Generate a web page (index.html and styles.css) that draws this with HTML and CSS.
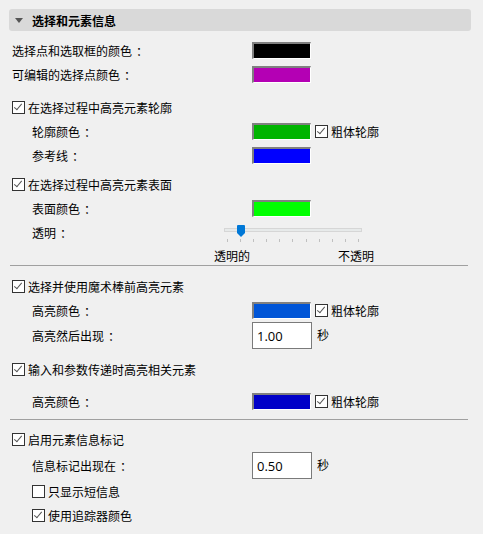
FILE: index.html
```html
<!DOCTYPE html>
<html lang="zh">
<head>
<meta charset="utf-8">
<link rel="stylesheet" href="styles.css">
</head>
<body>
<div class="panel">
  <div class="header">
    <svg class="tri" width="8" height="5" viewBox="0 0 8 5"><path d="M0 0H8L4 5Z" fill="#555"/></svg>
    <span>选择和元素信息</span>
  </div>

  <div class="content">
    <div class="row r1"><span class="label">选择点和选取框的颜色<span class="colon">：</span></span><span class="swatch" style="--c:#000000"></span></div>
    <div class="row"><span class="label">可编辑的选择点颜色<span class="colon">：</span></span><span class="swatch" style="--c:#b400b4"></span></div>

    <div class="row cbrow g9"><span class="cb on"></span><span>在选择过程中高亮元素轮廓</span></div>
    <div class="row"><span class="label ind">轮廓颜色<span class="colon">：</span></span><span class="swatch" style="--c:#00b400"></span><span class="cb on sm"></span><span>粗体轮廓</span></div>
    <div class="row"><span class="label ind">参考线<span class="colon">：</span></span><span class="swatch" style="--c:#0000ff"></span></div>

    <div class="row cbrow g5"><span class="cb on"></span><span>在选择过程中高亮元素表面</span></div>
    <div class="row"><span class="label ind">表面颜色<span class="colon">：</span></span><span class="swatch" style="--c:#00ff00"></span></div>
    <div class="row slrow">
      <span class="label ind">透明<span class="colon">：</span></span>
      <div class="slider">
        <div class="track"></div>
        <svg class="thumb" width="8" height="12" viewBox="0 0 8 12"><path d="M0 1Q0 0 1 0H7Q8 0 8 1V8L4 12L0 8Z" fill="#0078d7"/></svg>
        <div class="ticks"><i></i><i></i><i></i><i></i><i></i><i></i><i></i><i></i><i></i><i></i><i></i></div>
      </div>
    </div>
    <div class="sllabels"><span>透明的</span><span>不透明</span></div>
  </div>

  <div class="sep"></div>

  <div class="content">
    <div class="row cbrow g8"><span class="cb on"></span><span>选择并使用魔术棒前高亮元素</span></div>
    <div class="row"><span class="label ind">高亮颜色<span class="colon">：</span></span><span class="swatch" style="--c:#0055d7"></span><span class="cb on sm"></span><span>粗体轮廓</span></div>
    <div class="row inrow"><span class="label ind">高亮然后出现<span class="colon">：</span></span><span class="input">1.00</span><span class="unit">秒</span></div>
    <div class="row cbrow g8"><span class="cb on"></span><span>输入和参数传递时高亮相关元素</span></div>
    <div class="row g8"><span class="label ind">高亮颜色<span class="colon">：</span></span><span class="swatch" style="--c:#0000c8"></span><span class="cb on sm"></span><span>粗体轮廓</span></div>
  </div>

  <div class="sep s2"></div>

  <div class="content">
    <div class="row cbrow g7"><span class="cb on"></span><span>启用元素信息标记</span></div>
    <div class="row inrow g1"><span class="label ind">信息标记出现在<span class="colon">：</span></span><span class="input">0.50</span><span class="unit">秒</span></div>
    <div class="row cbrow ind2"><span class="cb"></span><span>只显示短信息</span></div>
    <div class="row cbrow ind2"><span class="cb on"></span><span>使用追踪器颜色</span></div>
  </div>
</div>
</body>
</html>
```

FILE: styles.css
```css
html, body {
  margin: 0;
  padding: 0;
  background: #f0f0f0;
}
body {
  font-family: "Noto Sans CJK SC", "Noto Sans", sans-serif;
  font-size: 12px;
  color: #000;
  width: 483px;
  height: 534px;
  overflow: hidden;
}
.panel {
  padding: 9px 12px 0 9px;
}
.header {
  height: 22px;
  background: #d9d9d9;
  border-radius: 3px;
  display: flex;
  align-items: center;
  font-weight: bold;
  font-size: 12px;
}
.header .tri {
  margin: 0 9px 0 6px;
}
.content {
  padding-left: 3px;
}
.row {
  height: 24px;
  display: flex;
  align-items: center;
  white-space: nowrap;
}
.colon {
  margin-left: 4px;
}
.r1 { margin-top: 7px; }
.g9 { margin-top: 9px; }
.g8 { margin-top: 8px; }
.g7 { margin-top: 7px; }
.g5 { margin-top: 5px; }
.g1 { margin-top: 1px; }
.label {
  width: 240px;
  flex: none;
}
.label.ind {
  padding-left: 20px;
  width: 220px;
}
.swatch {
  width: 59px;
  height: 17px;
  box-sizing: border-box;
  border-top: 2px solid #808080;
  border-left: 2px solid #808080;
  border-right: 1px solid #fff;
  border-bottom: 1px solid #fff;
  background: var(--c);
  flex: none;
}
.cb {
  width: 13px;
  height: 13px;
  box-sizing: border-box;
  border: 1px solid #333;
  background: #fff;
  margin-right: 3px;
  flex: none;
  position: relative;
}
.cb.on::after {
  content: "";
  position: absolute;
  left: 3px;
  top: 0px;
  width: 3px;
  height: 7px;
  border-right: 1.4px solid #555;
  border-bottom: 1.4px solid #555;
  transform: rotate(40deg);
}
.cb.sm {
  margin-left: 4px;
}
.ind2 {
  padding-left: 20px;
}
.slrow {
  position: relative;
}
.slider {
  position: relative;
  width: 140px;
  height: 24px;
  margin-left: -28px;
}
.track {
  position: absolute;
  left: 0;
  top: 8px;
  width: 138px;
  height: 4px;
  box-sizing: border-box;
  background: #e7eaea;
  border: 1px solid #d6d6d6;
}
.thumb {
  position: absolute;
  left: 13px;
  top: 5px;
}
.ticks {
  position: absolute;
  left: 3px;
  width: 132px;
  top: 19px;
  display: flex;
  justify-content: space-between;
}
.ticks i {
  display: block;
  width: 1px;
  height: 3px;
  background: #c0c0c0;
}
.sllabels {
  height: 20px;
  display: flex;
  align-items: center;
  padding-left: 202px;
  margin-top: 1px;
}
.sllabels span + span {
  margin-left: 88px;
}
.sep {
  height: 1px;
  background: #a0a0a0;
  margin: 0 3px 0 1px;
}
.s2 { margin-top: 6px; }
.inrow {
  height: 27px;
}
.input {
  width: 60px;
  height: 27px;
  box-sizing: border-box;
  border: 1px solid #7a7a7a;
  background: #fff;
  font-family: "Open Sans", "Noto Sans", sans-serif;
  font-size: 13px;
  display: flex;
  align-items: center;
  padding-left: 4px;
  flex: none;
}
.unit {
  margin-left: 5px;
  margin-top: -2px;
}
```
